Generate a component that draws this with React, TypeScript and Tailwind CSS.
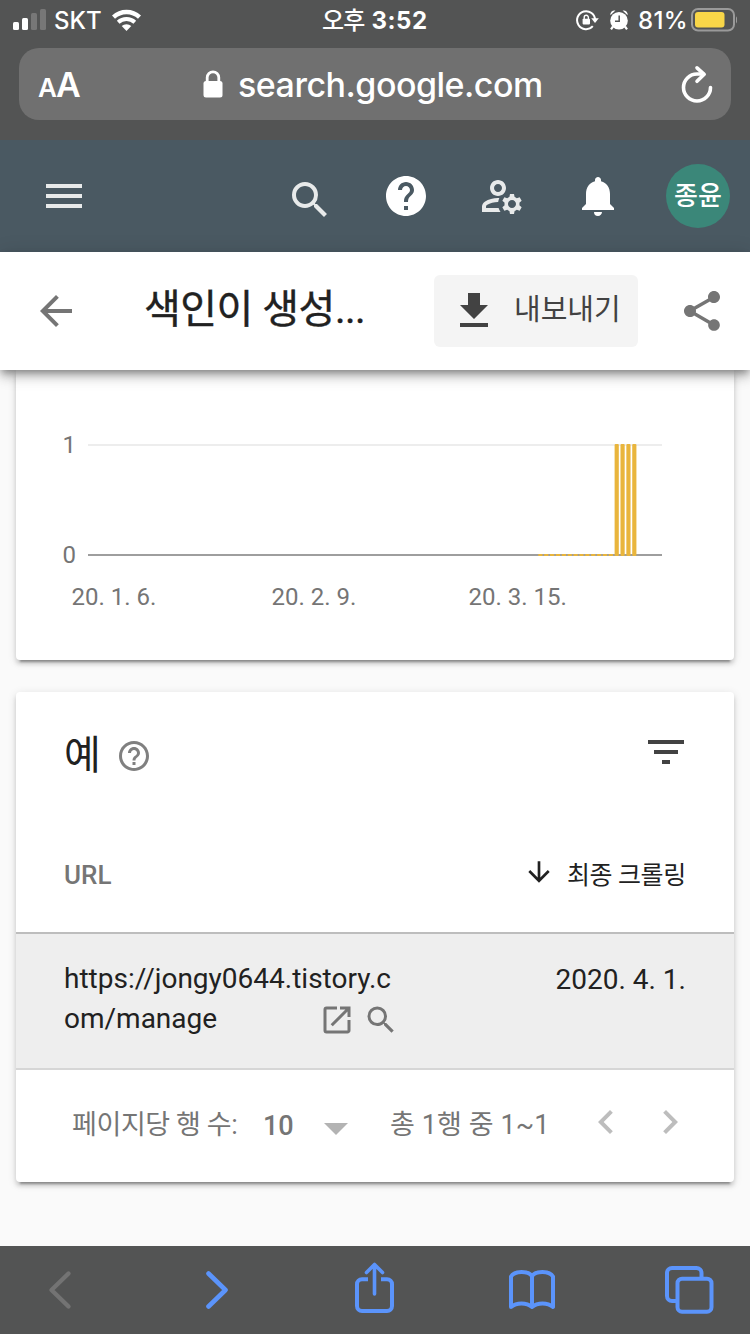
import { useState } from "react";
import {
  MdArrowBack,
  MdArrowDownward,
  MdChevronLeft,
  MdChevronRight,
  MdFilterList,
  MdHelp,
  MdHelpOutline,
  MdMenu,
  MdNotifications,
  MdOpenInNew,
  MdOutlineManageAccounts,
  MdSearch,
  MdShare,
} from "react-icons/md";

// Chart geometry, in px
const DAY = 5.87;
const FIRST_DAY = 524.4;
const DAILY_COUNTS = [0, 0, 0, 0, 0, 0, 0, 0, 0, 0, 0, 0, 0, 1, 1, 1, 1];

const X_LABELS = [
  { x: 55.5, text: "20. 1. 6." },
  { x: 255.5, text: "20. 2. 9." },
  { x: 452.5, text: "20. 3. 15." },
];

function StatusBar() {
  return (
    <div className="h-10 flex items-center text-white text-[24px] font-medium whitespace-nowrap">
      <svg className="ml-3 w-9 h-10 shrink-0" viewBox="0 0 36 40">
        <rect x="1" y="22" width="6" height="8" rx="1.5" fill="#fff" />
        <rect x="10" y="18" width="6" height="12" rx="1.5" fill="#fff" />
        <rect x="19" y="13" width="6" height="17" rx="1.5" fill="#777" />
        <rect x="28" y="9" width="6" height="21" rx="1.5" fill="#777" />
      </svg>
      <span className="ml-1.5 mt-0.5 w-[52px]">SKT</span>
      <svg className="ml-1.5 w-[30px] h-10 shrink-0" viewBox="0 0 30 40">
        <path d="M1.5 17.2a19 19 0 0 1 26 0" fill="none" stroke="#fff" strokeWidth="4.4" />
        <path d="M6.2 22.2a12.3 12.3 0 0 1 16.6 0" fill="none" stroke="#fff" strokeWidth="4" />
        <path d="M14.5 31l-4.8-4.9a7 7 0 0 1 9.6 0z" fill="#fff" />
      </svg>
      <div className="ml-[180px] mt-0.5 w-[112px] flex gap-[7px]">
        <span className="tracking-[-0.8px]">오후</span>
        <span className="font-bold tracking-[0.5px]">3:52</span>
      </div>
      <svg className="ml-[141px] w-6 h-10 shrink-0" viewBox="0 0 24 40">
        <path d="M17.8 26.2a9 9 0 1 1 2.3-6" fill="none" stroke="#fff" strokeWidth="2" />
        <path d="M16.2 18.2h7.6l-3.8 4.8z" fill="#fff" />
        <rect x="7.6" y="18.8" width="7.4" height="5.6" rx="0.8" fill="#fff" />
        <path d="M9.2 19v-1.6a2.1 2.1 0 0 1 4.2 0V19" fill="none" stroke="#fff" strokeWidth="1.4" />
      </svg>
      <svg className="ml-2.5 w-5 h-10 shrink-0" viewBox="0 0 20 40">
        <circle cx="10" cy="20.8" r="8.8" fill="#fff" />
        <path d="M1.4 15.2a4 4 0 0 1 5-4.6zM18.6 15.2a4 4 0 0 0-5-4.6z" fill="#fff" />
        <path d="M4 26.5l-2 2.8M16 26.5l2 2.8" stroke="#fff" strokeWidth="2.2" />
        <path d="M10.2 15.5v5.8H6" fill="none" stroke="#535454" strokeWidth="1.5" />
      </svg>
      <span className="ml-[9px] mt-0.5 w-[51px] tracking-[0.3px]">81%</span>
      <svg className="ml-0.5 w-[46px] h-10 shrink-0" viewBox="0 0 46 40">
        <rect x="1" y="9" width="42" height="21.5" rx="6" fill="none" stroke="#9a9a9a" strokeWidth="2" />
        <rect x="4" y="12" width="29.5" height="15.5" rx="3" fill="#f8d648" />
        <path d="M45 16.2c1.6.8 1.6 6.6 0 7.4z" fill="#9a9a9a" />
      </svg>
    </div>
  );
}

function AddressBar() {
  return (
    <div className="mx-[19px] mt-2 h-[72px] rounded-[20px] bg-[#707070] text-white flex items-center whitespace-nowrap font-medium">
      <div className="ml-[19px] w-[46px] flex items-baseline font-semibold tracking-[-1px]">
        <span className="text-[26px]">A</span>
        <span className="text-[34px]">A</span>
      </div>
      <svg className="ml-[119px] w-5 h-7 shrink-0" viewBox="0 0 20 28">
        <rect x="0.5" y="11" width="19" height="16.5" rx="2.5" fill="#fff" />
        <path d="M4.2 12V7.6a5.8 5.8 0 0 1 11.6 0V12" fill="none" stroke="#fff" strokeWidth="2.8" />
      </svg>
      <span className="ml-[15px] w-[310px] text-[34px] tracking-[-0.5px]">search.google.com</span>
      <svg className="ml-auto mr-[17px] w-[34px] h-10 shrink-0" viewBox="0 0 34 40" fill="none" stroke="#fff" strokeWidth="3.6" strokeLinecap="round" strokeLinejoin="round">
        <path d="M30.5 23.5a13.5 13.5 0 1 1-13.5-13.5h6" />
        <path d="M17 3.8l7.2 6.5-7.2 7" />
      </svg>
    </div>
  );
}

function AppBar() {
  return (
    <header className="h-28 bg-[#4a5962] text-white flex items-center pl-10 pr-5">
      <MdMenu className="size-12 text-[#e8eaea]" />
      <MdSearch className="ml-[198px] mt-2 size-12 text-[#e8eaea]" />
      <MdHelp className="ml-12 size-12" />
      <MdOutlineManageAccounts className="ml-12 size-12 text-[#e8eaea]" />
      <MdNotifications className="ml-12 size-12" />
      <div className="ml-11 size-16 rounded-full bg-[#3b8779] flex items-center justify-center text-[26px] font-medium whitespace-nowrap">
        종윤
      </div>
    </header>
  );
}

function TitleBar() {
  return (
    <div className="relative z-10 h-[118px] bg-white flex items-center shadow-[0_8px_10px_rgba(0,0,0,0.14),0_2px_20px_rgba(0,0,0,0.12),0_4px_8px_-2px_rgba(0,0,0,0.4)]">
      <MdArrowBack className="ml-8 size-12 text-[#757575]" />
      <h1 className="ml-16 mb-0.5 w-[290px] text-[40px] text-[#212121] whitespace-nowrap tracking-[-0.5px] [-webkit-text-stroke:0.4px_#212121]">
        색인이 생성...
      </h1>
      <button className="h-[72px] w-[204px] rounded-md bg-[#f4f4f4] text-[#424242] flex items-center pl-4 whitespace-nowrap">
        <svg className="size-12 shrink-0" viewBox="0 0 24 24" fill="currentColor">
          <path d="M19 9h-4V3H9v6H5l7 7 7-7zM5 18v2h14v-2H5z" />
        </svg>
        <span className="ml-4 text-[29px]">내보내기</span>
      </button>
      <MdShare className="ml-10 size-12 text-[#757575]" />
    </div>
  );
}

function CoverageChart() {
  return (
    <svg className="w-[718px] h-[290px]" viewBox="0 0 718 290">
      <rect x="72" y="74" width="574" height="2" fill="#ededed" />
      <rect x="72" y="184" width="574" height="2" fill="#9e9e9e" />
      {DAILY_COUNTS.map((count, i) => (
        <rect
          key={i}
          x={FIRST_DAY + i * DAY - 2.1}
          y={count ? 74 : 184}
          width="4.2"
          height={count ? 112 : 2}
          rx={count ? 1 : 0}
          fill="#e9b53c"
        />
      ))}
      <g fill="#757575" fontSize="24">
        <text x="46.5" y="83">1</text>
        <text x="46.5" y="193">0</text>
        {X_LABELS.map((label) => (
          <text key={label.text} x={label.x} y="235">
            {label.text}
          </text>
        ))}
      </g>
    </svg>
  );
}

function ExamplesCard() {
  const [rowsPerPage] = useState(10);

  return (
    <section className="mt-8 mx-4 h-[490px] rounded-[4px] bg-white shadow-[0_4px_4px_rgba(0,0,0,0.14),0_2px_10px_rgba(0,0,0,0.12),0_6px_2px_-4px_rgba(0,0,0,0.3)]">
      <div className="h-[120px] pl-12 pr-11 flex items-center">
        <h2 className="mt-2 w-[52px] text-[40px] text-[#212121]">예</h2>
        <MdHelpOutline className="mt-2 size-9 text-[#808080]" />
        <MdFilterList className="ml-auto size-12 text-[#424242]" />
      </div>

      <div className="h-[120px] pl-12 pr-12 flex items-center whitespace-nowrap">
        <span className="mt-1.5 text-[26px] font-medium text-[#757575]">URL</span>
        <MdArrowDownward className="ml-auto size-8 text-[#212121]" />
        <span className="ml-3 mt-[7px] w-[119px] text-[25px] tracking-[-0.4px] text-[#212121]">최종 크롤링</span>
      </div>

      {/* Result row */}
      <div className="h-[138px] border-t-2 border-t-[#bdbdbd] border-b-2 border-b-[#d6d6d6] bg-[#eeeeee] pl-12 pr-12 pt-[25px] flex justify-between text-[28px] leading-10 text-[#212121] whitespace-nowrap">
        <div className="w-[335px]">
          <div>https://jongy0644.tistory.c</div>
          <div className="flex items-center">
            <span>om/manage</span>
            <MdOpenInNew className="ml-auto mt-0.5 size-9 text-[#757575]" />
            <MdSearch className="ml-2 mt-0.5 size-9 text-[#757575]" />
          </div>
        </div>
        <div className="pt-px">2020. 4. 1.</div>
      </div>

      {/* Pagination */}
      <div className="h-28 pl-14 flex items-center text-[27px] text-[#757575] whitespace-nowrap">
        <span className="mb-0.5 w-[191px] tracking-[-0.4px]">페이지당 행 수:</span>
        <span className="w-[61px] font-medium">{rowsPerPage}</span>
        <svg className="mt-1.5 w-6 h-3 shrink-0" viewBox="0 0 24 12">
          <path d="M0 0h24L12 12z" fill="#b3b3b3" />
        </svg>
        <span className="mb-0.5 ml-[42px] w-[192px] tracking-[0.1px]">총 1행 중 1~1</span>
        <MdChevronLeft className="mb-2 size-12 text-[#bdbdbd]" />
        <MdChevronRight className="mb-2 ml-4 size-12 text-[#bdbdbd]" />
      </div>
    </section>
  );
}

function BrowserToolbar() {
  return (
    <footer className="h-[88px] bg-[#535454] flex items-center text-[#5b94fb]">
      <svg className="ml-12 w-6 h-[88px]" viewBox="0 0 24 88" fill="none" stroke="#737373" strokeWidth="4.4" strokeLinecap="round" strokeLinejoin="round">
        <path d="M20.5 27.5L3.5 44l17 16.5" />
      </svg>
      <svg className="ml-[132px] w-6 h-[88px]" viewBox="0 0 24 88" fill="none" stroke="currentColor" strokeWidth="4.6" strokeLinecap="round" strokeLinejoin="round">
        <path d="M4.5 27.5l17 16.5-17 16.5" />
      </svg>
      <svg className="ml-[127px] w-10 h-[88px]" viewBox="0 0 40 88" fill="none" stroke="currentColor" strokeWidth="4" strokeLinecap="round" strokeLinejoin="round">
        <path d="M13 33.2H7a5 5 0 0 0-5 5V60a5 5 0 0 0 5 5h25a5 5 0 0 0 5-5V38.2a5 5 0 0 0-5-5h-6" strokeLinecap="butt" />
        <path d="M19.5 48V19.5M11.5 26.5l8-8 8 8" strokeWidth="3.6" />
      </svg>
      <svg className="ml-[114px] w-[47px] h-[88px]" viewBox="0 0 47 88" fill="none" stroke="currentColor" strokeWidth="4" strokeLinecap="round" strokeLinejoin="round">
        <path d="M23 61V30C19 24.6 6 24.3 2 30.5V61C7.500 56.200 17.500 56.200 23 61C28.500 56.200 38.500 56.200 44 61V30.500C40 24.300 27 24.600 23 30" />
      </svg>
      <svg className="ml-[108px] w-[50px] h-[88px]" viewBox="0 0 50 88" fill="none" stroke="currentColor" strokeWidth="4">
        <path d="M13 55H8a5 5 0 0 1-5-5V27a5 5 0 0 1 5-5h24.5a5 5 0 0 1 5 5v5" />
        <rect x="13.5" y="32.7" width="34" height="33" rx="4.5" />
      </svg>
    </footer>
  );
}

export default function App() {
  return (
    <div className="w-[750px] h-[1334px] overflow-hidden flex flex-col bg-[#fafafa] font-['Roboto','Noto_Sans_CJK_KR',sans-serif]">
      <div className="h-[140px] bg-[#535454] font-['Inter','Noto_Sans_CJK_KR',sans-serif]">
        <StatusBar />
        <AddressBar />
      </div>
      <AppBar />
      <TitleBar />
      <main className="flex-1">
        <section className="mx-4 h-[290px] rounded-b-[4px] bg-white shadow-[0_4px_4px_rgba(0,0,0,0.14),0_2px_10px_rgba(0,0,0,0.12),0_6px_2px_-4px_rgba(0,0,0,0.3)]">
          <CoverageChart />
        </section>
        <ExamplesCard />
      </main>
      <BrowserToolbar />
    </div>
  );
}
